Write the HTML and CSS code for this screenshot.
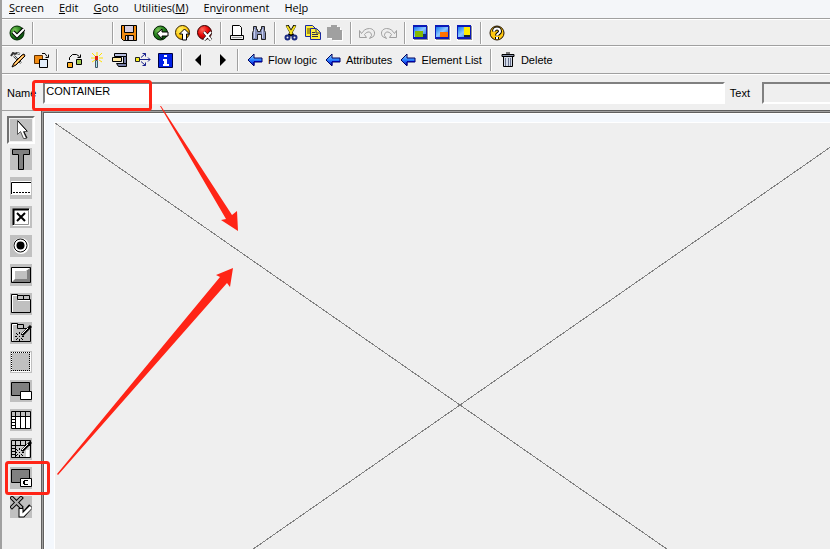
FILE: index.html
```html
<!DOCTYPE html>
<html lang="en">
<head>
<meta charset="utf-8">
<title>Screen Painter</title>
<link rel="stylesheet" href="styles.css">
</head>
<body>
<svg class="defs" aria-hidden="true">
  <defs>
    <linearGradient id="blue" x1="0" y1="0" x2="0" y2="1"><stop offset="0" stop-color="#9fe0ff"/><stop offset=".5" stop-color="#2a80ff"/><stop offset="1" stop-color="#0000c8"/></linearGradient>
    <linearGradient id="sky" x1="0" y1="0" x2="1" y2="1"><stop offset="0" stop-color="#1478f0"/><stop offset=".5" stop-color="#8cc8ff"/><stop offset="1" stop-color="#1060e0"/></linearGradient>
    <radialGradient id="green" cx=".35" cy=".3" r=".8"><stop offset="0" stop-color="#7cc65a"/><stop offset=".5" stop-color="#25801c"/><stop offset="1" stop-color="#003c0a"/></radialGradient>
    <radialGradient id="yellow" cx=".35" cy=".3" r=".8"><stop offset="0" stop-color="#fff36a"/><stop offset=".6" stop-color="#ffc60a"/><stop offset="1" stop-color="#c88000"/></radialGradient>
    <radialGradient id="red" cx=".35" cy=".3" r=".8"><stop offset="0" stop-color="#ff6a5a"/><stop offset=".5" stop-color="#e80808"/><stop offset="1" stop-color="#800000"/></radialGradient>
    <symbol id="arrow" viewBox="0 0 16 14"><path d="M1 7 7 1v4h8v4H7v4z" fill="url(#blue)" stroke="#000060"/><path d="M7 8.500h8M7 9v3" stroke="#0000a0"/></symbol>
    <symbol id="page" viewBox="0 0 16 16"><path d="M0 1h16v15H0z" fill="#fff"/><path d="M1 1h14v14H1z" fill="#909090"/><path d="M0 0h14v14H0z" fill="#0a18b8"/><path d="M1 2h12v10H1z" fill="url(#sky)"/></symbol>
    <symbol id="wand" viewBox="0 0 22 22"><path d="m21 4-9 9" stroke="#000" stroke-width="3"/><path d="m18 6-6 6" stroke="#fff"/><path d="M9 10h1v2H9zM9 14h1v1H9zM9 17h1v2H9zM5 14h2v1H5zM12 14h2v1h-2zM6 11h1v1H6zM7 12h1v1H7zM7 16h1v1H7zM6 17h1v1H6zM11 16h1v1h-1zM12 17h1v1h-1zM11 12h1v1h-1z"/></symbol>
  </defs>
</svg>
<div class="window">
  <nav class="menubar">
    <a href="#"><u>S</u>creen</a>
    <a href="#"><u>E</u>dit</a>
    <a href="#"><u>G</u>oto</a>
    <a href="#">Utilities(<u>M</u>)</a>
    <a href="#">En<u>v</u>ironment</a>
    <a href="#">He<u>l</u>p</a>
  </nav>

  <div class="toolbar standard">
    <button aria-label="Enter"><svg width="16" height="16"><circle cx="8" cy="8" r="7" fill="url(#green)" stroke="#002800"/><path d="m4 7 4 4 7-7" fill="none" stroke="#000" stroke-width="4"/><path d="m4 7 4 4 7-7" fill="none" stroke="#fff" stroke-width="2"/></svg></button>
    <span class="sep"></span>
    <span class="command"></span>
    <span class="sep"></span>
    <button aria-label="Save"><svg width="16" height="16"><path d="M.5.5h15v15H2.500l-2-2z" fill="#f08a10" stroke="#000"/><path d="M3.500.5h9v7h-9zM4.500 10.500h8v5h-8z" fill="#d8cede" stroke="#000"/><path d="M6 11h2v4H6z" fill="#222"/></svg></button>
    <span class="sep"></span>
    <button aria-label="Back"><svg width="16" height="16"><circle cx="7.500" cy="8" r="7" fill="url(#green)" stroke="#001c00"/><path d="m4 8.500 5-4.500v3h6v4H9v3z" fill="#fff" stroke="#000"/></svg></button>
    <button aria-label="Exit"><svg width="16" height="16"><circle cx="7.500" cy="7.500" r="7" fill="url(#yellow)" stroke="#302000"/><path d="m9.500 4 5 5h-3v6h-4V9h-3z" fill="#fff" stroke="#000"/></svg></button>
    <button aria-label="Cancel"><svg width="16" height="16"><circle cx="7.500" cy="7.500" r="7" fill="url(#red)" stroke="#300"/><path d="m7 7 7 8M14 7l-7 8" stroke="#000" stroke-width="3"/><path d="m7 7 7 8M14 7l-7 8" stroke="#fff" stroke-width="2"/></svg></button>
    <span class="sep"></span>
    <button aria-label="Print"><svg width="16" height="16"><path d="M3.500.5h7l2 2v8h-9z" fill="#fff" stroke="#000"/><path d="M1.500 10.500h13v4h-13z" fill="#eee" stroke="#000"/><path d="M3 12.500h10" stroke="#999"/></svg></button>
    <button aria-label="Find"><svg width="16" height="16"><path d="M2.500 1.500h3v3h1v2h3v-2h1v-3h3v4l1 2v7h-4v-5h-4v5h-5v-7l1-2z" fill="#8790b8" stroke="#222"/><path d="M3.500 4v9M11.500 4v9" stroke="#c8d0f0"/></svg></button>
    <span class="sep"></span>
    <button aria-label="Cut"><svg width="16" height="16"><path d="m4 0 6 11M12 0 6 11" stroke="#000" stroke-width="3"/><path d="m4 1 5 8M12 1 7 9" stroke="#f5df20" stroke-width="2"/><g fill="none" stroke="#1a2a80" stroke-width="2"><circle cx="4.500" cy="12.500" r="2"/><circle cx="11.500" cy="12.500" r="2"/></g></svg></button>
    <button aria-label="Copy"><svg width="16" height="16"><path d="M.5.500h7l3 3v8H.5z" fill="#ffef38" stroke="#1828a0"/><path d="M2 4h6M2 6h3M2 8h3" stroke="#554400"/><path d="M5.500 3.500h6l4 4v7h-10z" fill="#fff040" stroke="#1828a0"/><path d="M11 4v4h4M7 7.500h3M7 9.500h6M7 11.500h6" fill="none" stroke="#334"/></svg></button>
    <button aria-label="Paste" disabled><svg width="16" height="16"><path d="M1 3h4V1h6v2h3v3h2v10H6v-2H1z" fill="#fff"/><path d="M0 2h4V0h6v2h3v3h2v10H5v-2H0z" fill="#a0a0a0"/></svg></button>
    <span class="sep"></span>
    <button aria-label="Undo" disabled><svg width="18" height="16" viewBox="0 0 18 16"><path d="M1.500 5.500v7h7l-2-3c3-4 7-3 7 1l-2 3 4-2c3-5-1-8-4-8-4 0-6 2-8 5z" fill="#eee" stroke="#a0a0a0"/></svg></button>
    <button aria-label="Redo" disabled><svg width="18" height="16" viewBox="0 0 18 16"><path d="M16.500 5.500v7h-7l2-3c-3-4-7-3-7 1l2 3-4-2c-3-5 1-8 4-8 4 0 6 2 8 5z" fill="#eee" stroke="#a0a0a0"/></svg></button>
    <span class="sep"></span>
    <button aria-label="Layout"><svg width="16" height="16"><use href="#page"/><path d="M2 6h8v6H2z" fill="#84b800"/><path d="M10 9h3v3h-3z" fill="#103078"/></svg></button>
    <button aria-label="Elements"><svg width="16" height="16"><use href="#page"/><path d="M5 7h8v5H5z" fill="#ff7200"/></svg></button>
    <button aria-label="Attributes view"><svg width="16" height="16"><use href="#page"/><path d="M7 2h6v8H7z" fill="#ffec00"/><path d="M7 10h6v2H7z" fill="#123"/></svg></button>
    <span class="sep"></span>
    <button aria-label="Help"><svg width="16" height="16"><circle cx="8" cy="8" r="7" fill="#ffc810" stroke="#201000"/><path d="M5 6.500c0-4 6-4 6 0 0 2-3 2-3 4M8 12v2" fill="none" stroke="#000" stroke-width="4"/><path d="M5 6.500c0-4 6-4 6 0 0 2-3 2-3 4M8 12v2" fill="none" stroke="#fff" stroke-width="2"/></svg></button>
  </div>

  <div class="toolbar application">
    <button aria-label="Display or change"><svg width="16" height="16"><path d="m1 4 2-3 2 1 2-1 3 1M4 4l7 7" fill="none" stroke="#333" stroke-width="2"/><path d="m4 4 7 7M7 1l3 1" stroke="#d8e0e0"/><path d="m4 11 8-8 2-1 1 2-9 9-4 2z" fill="#f5a040" stroke="#000"/><path d="m5 12 8-8" stroke="#ffe9a0"/></svg></button>
    <button aria-label="Other object"><svg width="16" height="16"><path d="M1.500 3.500h8v8h-8z" fill="#f08a10" stroke="#603000"/><path d="M6.500 7.500h8v8h-8z" fill="#e2edfa" stroke="#000"/><path d="M9 1.500h3l2 3m1.500-2v3h-3" fill="none" stroke="#000"/></svg></button>
    <span class="sep"></span>
    <button aria-label="Activate"><svg width="16" height="16"><path d="M1.500 10.500h5v5h-5z" fill="#ffb020" stroke="#000"/><path d="M10.500 7.500h5v5h-5z" fill="#9fca50" stroke="#000"/><path d="M3.500 8V5.500l3-3h4l3 2m1-2v3h-3" fill="none" stroke="#000"/></svg></button>
    <button aria-label="Generate"><svg width="16" height="16"><path d="M8 0v4M3 1l3 3M13 1l-3 3M2 6h4M10 6h4M3 10l3-2M13 10l-3-2" stroke="#ffe000"/><path d="M6 4h3v4H6z" fill="#e02010"/><path d="M6.500 8.500h2v7h-2z" fill="#a8e8f0" stroke="#456"/></svg></button>
    <button aria-label="Where-used"><svg width="16" height="16"><path d="M2.500 1.500h12v3h-12z" fill="#b8c0e0" stroke="#000"/><path d="M11.500 4.500h3v7h-3zM4.500 11.500h10v3h-8z" fill="#7880a8" stroke="#000"/><path d="M.5 5.500h9v4h-9z" fill="#ffe9a0" stroke="#000"/></svg></button>
    <button aria-label="Hierarchy"><svg width="17" height="16"><path d="M1.500 5.500h4v4h-4z" fill="#f8ef20" stroke="#222"/><path d="M6 7.500h10M7 5.500l4.500-4M7 9.500l4.500 4M14 5.500l2 2-2 2M8.500 1.500h3v3M8.500 13.500h3v-3" fill="none" stroke="#18208c"/></svg></button>
    <button aria-label="Information"><svg width="15" height="15"><path d="M.5.500h14v14H.5z" fill="#0020e8" stroke="#000040"/><path d="M6 2h3v2H6zM5 6h4v5h2v2H5v-2h1V8H5z" fill="#fff"/></svg></button>
    <span class="sep"></span>
    <button aria-label="Previous"><svg width="16" height="16"><path d="m4 8 6-6v12z"/></svg></button>
    <button aria-label="Next"><svg width="16" height="16"><path d="m12 8-6-6v12z"/></svg></button>
    <span class="sep"></span>
    <button class="labelled"><svg width="16" height="14"><use href="#arrow"/></svg>Flow logic</button>
    <button class="labelled"><svg width="16" height="14"><use href="#arrow"/></svg>Attributes</button>
    <button class="labelled"><svg width="16" height="14"><use href="#arrow"/></svg>Element List</button>
    <span class="sep"></span>
    <button class="labelled"><svg width="16" height="16"><path d="M3.500 4.500h9v10h-9z" fill="#d4dbe8" stroke="#000"/><path d="M2 2.500h12v2H2zM6 1h4" fill="#8790a8" stroke="#000"/><path d="M5.500 6v8M8.500 6v8M10.500 6v8" stroke="#68718c"/></svg>Delete</button>
  </div>

  <div class="fields">
    <label for="name">Name</label>
    <input id="name" class="name" type="text" value="CONTAINER">
    <label for="text">Text</label>
    <input id="text" class="text" type="text" readonly>
  </div>

  <main class="editor">
    <div class="palette">
      <button class="active" aria-label="Select"><svg width="22" height="22" viewBox="0 0 22 22"><path d="M7.500 1.500v14l3-3 3 7h3l-3-7h4z" fill="#fff" stroke="#555"/><path d="m8 2 9 10M14 13l3 6" stroke="#000"/></svg></button>
      <button aria-label="Text field"><svg width="22" height="22" viewBox="0 0 22 22"><path d="M2.500 1.500h17v5h-6v15h-5v-15h-6z" fill="#808080" stroke="#000"/></svg></button>
      <button aria-label="Input field"><svg width="22" height="22" viewBox="0 0 22 22"><path d="M1 4h20v14H1z" fill="#fff"/><path d="M1.500 17V5.500H21" fill="none" stroke="#000"/><path d="M3 15.500h17" stroke="#000" stroke-dasharray="2 1"/></svg></button>
      <button aria-label="Checkbox"><svg width="22" height="22" viewBox="0 0 22 22"><path d="M3 3h17v17H3z" fill="#fff"/><path d="M3.500 19V3.500H19" fill="none" stroke="#000" stroke-width="2"/><path d="M18.500 4v14.500H4" fill="none" stroke="#909090"/><path d="m7 7 8 8M15 7l-8 8" stroke="#000" stroke-width="2"/></svg></button>
      <button aria-label="Radio button"><svg width="22" height="22" viewBox="0 0 22 22"><circle cx="11" cy="11" r="8" fill="#fff"/><circle cx="10.500" cy="10.500" r="6.500" fill="#fff" stroke="#000"/><circle cx="10.500" cy="10.500" r="4"/></svg></button>
      <button aria-label="Pushbutton"><svg width="22" height="22" viewBox="0 0 22 22"><path d="M1.500 3.500h19v15h-19z" fill="#808080" stroke="#000"/><path d="M2 4h18l-4 3v7H6l-4 4z" fill="#fff"/><path d="M5 7h12v8H5z" fill="#c0c0c0"/></svg></button>
      <button aria-label="Tabstrip"><svg width="22" height="22" viewBox="0 0 22 22"><path d="M1.500 19.500v-18h6v5h13v13zM7.500 6V2.500h6V6m0-3.500h6V6" fill="#c0c0c0" stroke="#000"/><path d="M2.500 19V2.500H7M8 7.500h12" fill="none" stroke="#fff"/></svg></button>
      <button aria-label="Tabstrip wizard"><svg width="22" height="22" viewBox="0 0 22 22"><path d="M1.500 19.500v-18h6v5h13v13zM7.500 6V2.500h6V6" fill="#c0c0c0" stroke="#000"/><path d="M2.500 19V2.500H7" fill="none" stroke="#fff"/><use href="#wand"/></svg></button>
      <button aria-label="Box"><svg width="22" height="22" viewBox="0 0 22 22"><path d="M1.500 1.500h19v19h-19z" fill="none" stroke="#fff"/><path d="M1 1.500h19M1 19.500h19M1.500 1v19M19.500 1v19" stroke="#000" stroke-dasharray="1 1" shape-rendering="crispEdges"/></svg></button>
      <button aria-label="Subscreen area"><svg width="22" height="22" viewBox="0 0 22 22"><path d="M1.500 2.500h18v13h-18z" fill="#808080" stroke="#000"/><path d="M10.500 11.500h11v8h-11z" fill="#fff" stroke="#000"/></svg></button>
      <button aria-label="Table control"><svg width="22" height="22" viewBox="0 0 22 22"><path d="M1.500 2.500h19v17h-19z" fill="#fff" stroke="#000"/><path d="M2 3h18v4H2z" fill="#c0c0c0"/><path d="M2 7.500h18M5.500 3v16M10.500 3v16M15.500 3v16M2 10.500h3M2 13.500h3M2 16.500h3" stroke="#000"/></svg></button>
      <button aria-label="Table wizard"><svg width="22" height="22" viewBox="0 0 22 22"><path d="M1.500 2.500h19v17h-19z" fill="#ccc" stroke="#000"/><path d="M2 7.500h18M5.500 3v16M10.500 3v5M15.500 3v5M2 10.500h3M2 13.500h3M2 16.500h3" stroke="#000"/><path d="M16 12h3v7h-3z" fill="#fff"/><use href="#wand"/></svg></button>
      <button aria-label="Custom control"><svg width="22" height="22" viewBox="0 0 22 22"><path d="M1.500 2.500h18v13h-18z" fill="#808080" stroke="#000"/><path d="M10.500 11.500h11v8h-11z" fill="#fff" stroke="#000"/><path d="M14 13h4v1h-3v3h3v1h-4v-1h-1v-3h1z"/></svg></button>
      <button aria-label="Status icon"><svg width="22" height="22" viewBox="0 0 22 22"><path d="m2 2 9 9M11 2l-9 9" stroke="#000" stroke-width="4" stroke-linecap="square"/><path d="m2 2 9 9M11 2l-9 9" stroke="#b0b0b0" stroke-width="2" stroke-linecap="square"/><path d="M11 12v7h2l8-9" fill="none" stroke="#000" stroke-width="5"/><path d="M11 13v6h2l8-8" fill="none" stroke="#fff" stroke-width="3"/></svg></button>
    </div>
    <div class="workspace">
      <div class="screen">
        <svg class="container" viewBox="0 0 810 564" width="810" height="564"><path d="m0 0 810 564M810 0 0 564" stroke="#808080" shape-rendering="crispEdges"/></svg>
      </div>
    </div>
  </main>
</div>
<svg class="marks" viewBox="0 0 260 549" width="260" height="549" aria-hidden="true">
  <g fill="none" stroke="#ff2416" stroke-width="3"><rect x="33.500" y="81.500" width="117" height="28" rx="2"/><rect x="6.500" y="462.500" width="42" height="31" rx="2"/></g>
  <path d="m161 106 71 109 5-4 1 20-17-11 5-1-66-113zM57 474l163-197-4-2 17-7-3 19-3-4L58 475z" fill="#ff2416"/>
</svg>
</body>
</html>
```
FILE: styles.css
```css
* { box-sizing: border-box; }

body {
  margin: 0;
  height: 100vh;
  overflow: hidden;
  position: relative;
  background: #efefef;
  color: #000;
  font: 11px/14px "Liberation Sans", Arial, sans-serif;
}

.defs { position: absolute; width: 0; height: 0; }

.window {
  display: flex;
  flex-direction: column;
  height: 100%;
  border-left: 2px solid #a0a0a0;
}

.menubar {
  display: flex;
  flex: none;
  gap: 15px;
  height: 19px;
  padding-left: 7px;
  background: #f4f6f9;
  border-bottom: 1px solid #a0a0a0;
  font: 11px/16px "Open Sans", "Noto Sans", sans-serif;
}

.menubar a { color: #000; text-decoration: none; }

.toolbar {
  display: flex;
  flex: none;
  align-items: center;
  height: 27px;
  border-top: 1px solid #fff;
  border-bottom: 1px solid #a0a0a0;
}

.application { height: 28px; }

button {
  display: flex;
  flex: none;
  align-items: center;
  justify-content: center;
  padding: 0;
  border: 0;
  background: none;
  color: #000;
  font: inherit;
}

.standard, .application { padding-left: 4px; }
.toolbar button { width: 22px; height: 24px; }
.application button { width: 23px; }

.application .labelled {
  width: auto;
  gap: 5px;
  padding: 0 4px;
}

.sep {
  flex: none;
  width: 2px;
  height: 22px;
  margin: 0 4px;
  border-left: 1px solid #a0a0a0;
  border-right: 1px solid #fff;
}

.command { width: 70px; }

.fields {
  display: flex;
  flex: none;
  align-items: center;
  height: 36px;
  padding-left: 5px;
  overflow: hidden;
  border-top: 1px solid #fff;
}

.fields input {
  height: 22px;
  padding: 0 1px 3px;
  border: 2px solid;
  border-color: #808080 #fff #fff #808080;
  border-radius: 0;
  outline: 0;
  font: inherit;
}

.name { flex: 1; min-width: 0; margin: 0 5px 0 7px; background: #fff; }
.text { flex: none; width: 88px; margin: 0 -20px 0 12px; background: #efefef; }

.editor {
  display: flex;
  flex: 1;
  min-height: 0;
}

.palette {
  display: flex;
  flex: none;
  flex-direction: column;
  gap: 1px;
  width: 39px;
  padding: 5px 0 0 5px;
  border-top: 1px solid #a0a0a0;
}

.palette button { width: 28px; height: 28px; }
.palette svg { background: #c0c0c0; }

.palette .active {
  border: 2px solid;
  border-color: #707070 #fff #fff #707070;
}

.workspace {
  flex: 1;
  min-width: 0;
  padding: 11px 0 0 12px;
  overflow: hidden;
  background: #f4f8fd;
  border: 1px solid #606060;
  border-right: 0;
  border-bottom: 0;
  box-shadow: inset 1px 1px #a0a0a0, inset 2px 2px #606060, inset 3px 3px #fff;
}

.screen {
  height: 100%;
  overflow: hidden;
  background: #efefef;
  border-top: 1px solid #fff;
  border-left: 1px solid #fff;
}

.container { display: block; }

.marks {
  position: absolute;
  top: 0;
  left: 0;
  pointer-events: none;
}
```
